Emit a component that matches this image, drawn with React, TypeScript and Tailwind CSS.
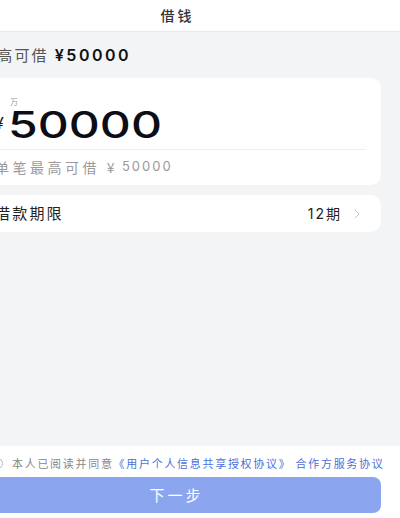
const font = "font-['Noto_Sans_CJK_SC','Noto_Sans',sans-serif]";
const num = "font-['Inter',sans-serif]";

export default function App() {
  return (
    <div className={`w-[400px] h-[518px] overflow-hidden bg-[#f3f4f6] ${font}`}>
      <div className="w-[436px] h-full -ml-[36px] flex flex-col">
        {/* top bar */}
        <header className="h-[32px] shrink-0 bg-white border-b border-[#e9e9eb] flex items-center justify-center">
          <span className="text-[14px] font-medium text-[#333] tracking-[3px] pr-[9px]">借钱</span>
        </header>

        <main className="flex-1 pl-4 pr-[19px]">
          <div className="h-[46px] flex items-center text-[15px] text-[#555] tracking-[2.2px]">
            最高可借
            <span className={`ml-[6px] ${num} font-semibold text-[16px] text-[#111] tracking-[2.5px]`}>¥50000</span>
          </div>

          {/* amount card */}
          <div className="bg-white rounded-[10px] px-[15px] pt-[20px] pb-[8px]">
            <div className="pl-[15px] h-[8px] text-[8px] leading-none text-[#999]">万</div>
            <div className="flex items-start h-[38px]">
              <span className={`${num} text-[16px] leading-none text-[#111] mt-[9px]`}>¥</span>
              <span
                className={`${num} ml-[4px] inline-block origin-left scale-x-[1.3] text-[37px] leading-[38px] font-medium text-[#0d0d17]`}
              >
                50000
              </span>
            </div>
            <div className="h-px bg-[#eeeef0] mt-[5px]" />
            <div className="mt-[7px] h-[20px] flex items-center text-[14px] text-[#9a9a9a] tracking-[3.5px]">
              单笔最高可借 ¥<span className={`${num} ml-[4px] text-[13px] tracking-[2px]`}>50000</span>
            </div>
          </div>

          {/* term row */}
          <div className="mt-[10px] h-[37px] bg-white rounded-[10px] pl-[15px] pr-[21px] flex items-center justify-between">
            <span className="text-[15px] text-[#222] tracking-[2.2px]">借款期限</span>
            <span className="flex items-center gap-[12px] text-[14px] text-[#222]">
              <span className="tracking-[2px]">
                <span className={num}>12</span>期
              </span>
              <svg width="6" height="10" viewBox="0 0 6 10" fill="none">
                <path d="M1 1l4 4-4 4" stroke="#c4c4c4" strokeWidth="1" strokeLinecap="round" strokeLinejoin="round" />
              </svg>
            </span>
          </div>
        </main>

        <footer className="shrink-0 bg-white pl-4 pr-[19px] pt-[9px] pb-[5px]">
          <div className="flex items-center text-[11px] whitespace-nowrap h-[16px] tracking-[1.7px]">
            <span className="w-[11px] h-[11px] rounded-full border border-[#bbb] shrink-0 ml-[12px] mr-[9px]" />
            <span className="text-[#888]">本人已阅读并同意</span>
            <span className="text-[#4b6fd9]">《用户个人信息共享授权协议》 合作方服务协议</span>
          </div>
          <button className="mt-[6px] w-full h-[36px] rounded-[8px] bg-[#8ba5ef] text-white text-[15px] tracking-[3px] pr-[8px]">
            下一步
          </button>
        </footer>
      </div>
    </div>
  );
}
